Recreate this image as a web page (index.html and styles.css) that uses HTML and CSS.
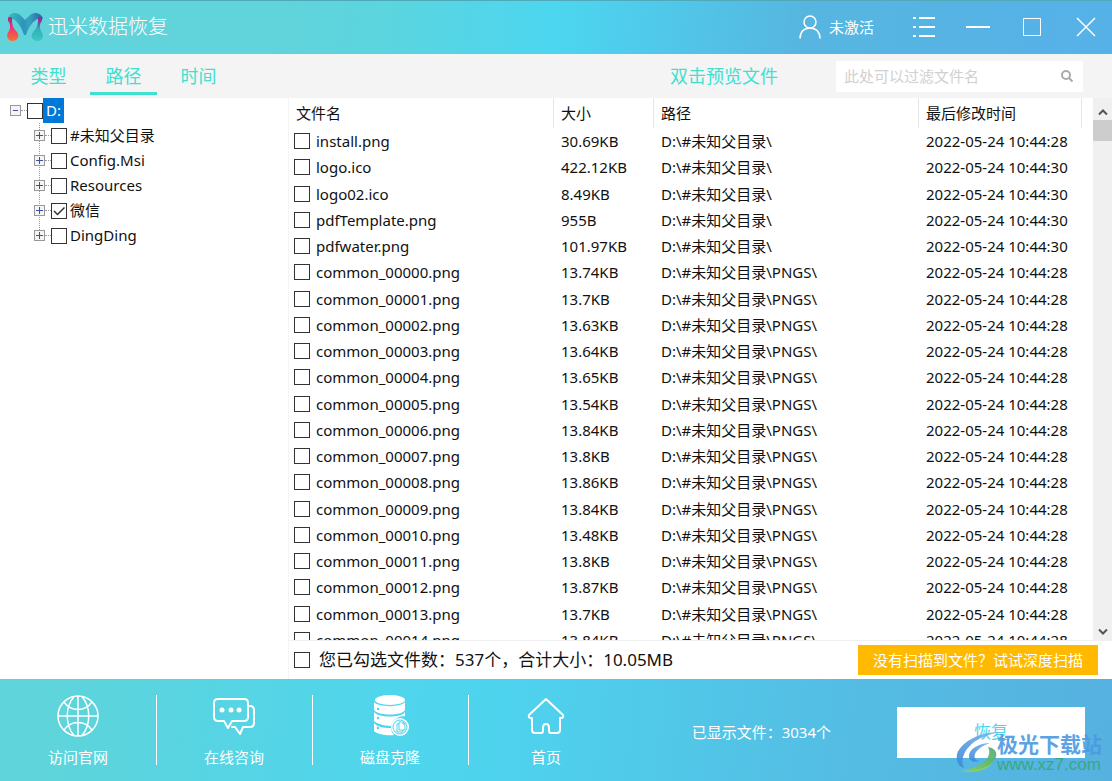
FILE: index.html
```html
<!DOCTYPE html>
<html lang="zh-CN">
<head>
<meta charset="utf-8">
<title>迅米数据恢复</title>
<link rel="stylesheet" href="styles.css">
</head>
<body>
<header class="titlebar">
  <svg class="logo" viewBox="0 0 36 30" aria-hidden="true">
    <defs>
      <linearGradient id="lg-arch" x1="0" y1="0" x2="1" y2="0"><stop offset="0" stop-color="#35c0c4"/><stop offset=".45" stop-color="#2f93bb"/><stop offset=".6" stop-color="#34a5bd"/><stop offset="1" stop-color="#2d5ea8"/></linearGradient>
      <linearGradient id="lg-left" x1="0" y1="0" x2="0" y2="1"><stop offset="0" stop-color="#a5267f"/><stop offset=".4" stop-color="#ee2f80"/><stop offset="1" stop-color="#f8722c"/></linearGradient>
      <linearGradient id="lg-right" x1="0" y1="0" x2="0" y2="1"><stop offset="0" stop-color="#a02587"/><stop offset=".25" stop-color="#7a4a9a"/><stop offset=".5" stop-color="#2fb0bc"/><stop offset="1" stop-color="#3cc8c0"/></linearGradient>
    </defs>
    <path fill="url(#lg-arch)" d="M1 7C1 1 9 -1 13 3L18 8L23 3C27 -1 35 1 36 7L32 6C26 9 22 14 19 23H17C14 14 10 8 4 6Z"/>
    <path fill="url(#lg-left)" d="M1 6C3 4 6 5 5 8C5 13 6 16 9 19C14 24 10 29 6 29C1 29 -2 24 2 19C4 15 3 11 1 9Z"/>
    <path fill="url(#lg-right)" d="M35 6C33 4 30 5 31 8C31 13 30 16 27 19C22 24 26 29 30 29C35 29 38 24 34 19C32 15 33 11 35 9Z"/>
  </svg>
  <h1 class="app-name">迅米数据恢复</h1>
  <button class="account" type="button">
    <svg class="icon-user" viewBox="0 0 22 24" aria-hidden="true"><circle cx="11" cy="7" r="6"/><path d="M1 23.500C1 17 5 13 11 13S21 17 21 23.500"/></svg>
    <span>未激活</span>
  </button>
  <div class="window-buttons">
    <button type="button" aria-label="菜单"><svg viewBox="0 0 24 24"><path stroke-width="2" d="M1 3H4M7 3H23M1 12H4M7 12H23M1 21H4M7 21H23"/></svg></button>
    <button type="button" aria-label="最小化"><svg viewBox="0 0 24 24"><path stroke-width="2" d="M0 12H24"/></svg></button>
    <button type="button" aria-label="最大化"><svg viewBox="0 0 24 24"><path stroke-width="1" d="M3.500 3.500H20.500V20.500H3.500Z"/></svg></button>
    <button type="button" aria-label="关闭"><svg viewBox="0 0 24 24"><path stroke-width="1.500" d="M3 3L21 21M21 3L3 21"/></svg></button>
  </div>
</header>

<div class="toolbar">
  <nav class="tabs">
    <button class="tab" type="button">类型</button>
    <button class="tab tab-active" type="button">路径</button>
    <button class="tab" type="button">时间</button>
  </nav>
  <span class="hint">双击预览文件</span>
  <div class="search">
    <input class="search-input" type="text" placeholder="此处可以过滤文件名" aria-label="过滤文件名">
    <button class="search-button" type="button" aria-label="搜索"><svg viewBox="0 0 14 14"><circle cx="6" cy="6" r="4"/><path d="M9 9L12.500 12.500"/></svg></button>
  </div>
</div>

<main class="main">
  <aside class="tree">
    <div class="node">
      <button class="expander" type="button" aria-label="折叠"></button><i class="dots"></i>
      <label class="node-label"><input class="check" type="checkbox"><span class="node-text node-selected">D:</span></label>
    </div>
    <div class="children">
      <div class="node"><button class="expander expander-plus" type="button" aria-label="展开"></button><i class="dots"></i><label class="node-label"><input class="check" type="checkbox"><span class="node-text">#未知父目录</span></label></div>
      <div class="node"><button class="expander expander-plus" type="button" aria-label="展开"></button><i class="dots"></i><label class="node-label"><input class="check" type="checkbox"><span class="node-text">Config.Msi</span></label></div>
      <div class="node"><button class="expander expander-plus" type="button" aria-label="展开"></button><i class="dots"></i><label class="node-label"><input class="check" type="checkbox"><span class="node-text">Resources</span></label></div>
      <div class="node"><button class="expander expander-plus" type="button" aria-label="展开"></button><i class="dots"></i><label class="node-label"><input class="check" type="checkbox" checked><span class="node-text">微信</span></label></div>
      <div class="node"><button class="expander expander-plus" type="button" aria-label="展开"></button><i class="dots"></i><label class="node-label"><input class="check" type="checkbox"><span class="node-text">DingDing</span></label></div>
    </div>
  </aside>

  <section class="content">
    <div class="list">
      <div class="list-view">
        <table class="files">
          <colgroup><col><col class="col-size"><col><col class="col-date"></colgroup>
          <thead><tr><th>文件名</th><th>大小</th><th>路径</th><th>最后修改时间</th></tr></thead>
          <tbody>
            <tr><td><label class="file"><input class="check" type="checkbox">install.png</label></td><td>30.69KB</td><td>D:\#未知父目录\</td><td>2022-05-24 10:44:28</td></tr>
            <tr><td><label class="file"><input class="check" type="checkbox">logo.ico</label></td><td>422.12KB</td><td>D:\#未知父目录\</td><td>2022-05-24 10:44:30</td></tr>
            <tr><td><label class="file"><input class="check" type="checkbox">logo02.ico</label></td><td>8.49KB</td><td>D:\#未知父目录\</td><td>2022-05-24 10:44:30</td></tr>
            <tr><td><label class="file"><input class="check" type="checkbox">pdfTemplate.png</label></td><td>955B</td><td>D:\#未知父目录\</td><td>2022-05-24 10:44:30</td></tr>
            <tr><td><label class="file"><input class="check" type="checkbox">pdfwater.png</label></td><td>101.97KB</td><td>D:\#未知父目录\</td><td>2022-05-24 10:44:30</td></tr>
            <tr><td><label class="file"><input class="check" type="checkbox">common_00000.png</label></td><td>13.74KB</td><td>D:\#未知父目录\PNGS\</td><td>2022-05-24 10:44:28</td></tr>
            <tr><td><label class="file"><input class="check" type="checkbox">common_00001.png</label></td><td>13.7KB</td><td>D:\#未知父目录\PNGS\</td><td>2022-05-24 10:44:28</td></tr>
            <tr><td><label class="file"><input class="check" type="checkbox">common_00002.png</label></td><td>13.63KB</td><td>D:\#未知父目录\PNGS\</td><td>2022-05-24 10:44:28</td></tr>
            <tr><td><label class="file"><input class="check" type="checkbox">common_00003.png</label></td><td>13.64KB</td><td>D:\#未知父目录\PNGS\</td><td>2022-05-24 10:44:28</td></tr>
            <tr><td><label class="file"><input class="check" type="checkbox">common_00004.png</label></td><td>13.65KB</td><td>D:\#未知父目录\PNGS\</td><td>2022-05-24 10:44:28</td></tr>
            <tr><td><label class="file"><input class="check" type="checkbox">common_00005.png</label></td><td>13.54KB</td><td>D:\#未知父目录\PNGS\</td><td>2022-05-24 10:44:28</td></tr>
            <tr><td><label class="file"><input class="check" type="checkbox">common_00006.png</label></td><td>13.84KB</td><td>D:\#未知父目录\PNGS\</td><td>2022-05-24 10:44:28</td></tr>
            <tr><td><label class="file"><input class="check" type="checkbox">common_00007.png</label></td><td>13.8KB</td><td>D:\#未知父目录\PNGS\</td><td>2022-05-24 10:44:28</td></tr>
            <tr><td><label class="file"><input class="check" type="checkbox">common_00008.png</label></td><td>13.86KB</td><td>D:\#未知父目录\PNGS\</td><td>2022-05-24 10:44:28</td></tr>
            <tr><td><label class="file"><input class="check" type="checkbox">common_00009.png</label></td><td>13.84KB</td><td>D:\#未知父目录\PNGS\</td><td>2022-05-24 10:44:28</td></tr>
            <tr><td><label class="file"><input class="check" type="checkbox">common_00010.png</label></td><td>13.48KB</td><td>D:\#未知父目录\PNGS\</td><td>2022-05-24 10:44:28</td></tr>
            <tr><td><label class="file"><input class="check" type="checkbox">common_00011.png</label></td><td>13.8KB</td><td>D:\#未知父目录\PNGS\</td><td>2022-05-24 10:44:28</td></tr>
            <tr><td><label class="file"><input class="check" type="checkbox">common_00012.png</label></td><td>13.87KB</td><td>D:\#未知父目录\PNGS\</td><td>2022-05-24 10:44:28</td></tr>
            <tr><td><label class="file"><input class="check" type="checkbox">common_00013.png</label></td><td>13.7KB</td><td>D:\#未知父目录\PNGS\</td><td>2022-05-24 10:44:28</td></tr>
            <tr><td><label class="file"><input class="check" type="checkbox">common_00014.png</label></td><td>13.84KB</td><td>D:\#未知父目录\PNGS\</td><td>2022-05-24 10:44:28</td></tr>
          </tbody>
        </table>
      </div>
      <div class="scrollbar">
        <button type="button" aria-label="向上滚动"><svg viewBox="0 0 10 8"><path d="M1 6.500L5 2.500L9 6.500"/></svg></button>
        <div class="thumb"></div>
        <button class="scroll-down" type="button" aria-label="向下滚动"><svg viewBox="0 0 10 8"><path d="M1 1.500L5 5.500L9 1.500"/></svg></button>
      </div>
    </div>
    <div class="summary">
      <label class="summary-label"><input class="check" type="checkbox">您已勾选文件数：537个，合计大小：10.05MB</label>
      <button class="deep-scan" type="button">没有扫描到文件？试试深度扫描</button>
    </div>
  </section>
</main>

<footer class="footer">
  <nav class="actions">
    <a class="action" href="#site">
      <svg viewBox="0 0 42 42"><g fill="none" stroke="#fff" stroke-width="1.500"><circle cx="21" cy="21" r="20"/><path d="M21 1V41M1 21H41M7 7C14 17 28 17 35 7M7 35C14 25 28 25 35 35M17 1.500C8 12 8 30 17 40.500M25 1.500C34 12 34 30 25 40.500"/></g></svg>
      <span>访问官网</span>
    </a>
    <a class="action" href="#chat">
      <svg viewBox="0 0 42 42"><g fill="none" stroke="#fff" stroke-width="2" stroke-linejoin="round" stroke-linecap="round"><path d="M5 4H31Q35 4 35 8V22Q35 26 31 26H19L15 33L11 26H5Q1 26 1 22V8Q1 4 5 4ZM37 11Q41 11 41 15V28Q41 32 37 32H30L27 39L22 32H19"/></g><g fill="#fff"><circle cx="9" cy="15" r="2.500"/><circle cx="18" cy="15" r="2.500"/><circle cx="26" cy="15" r="2.500"/></g></svg>
      <span>在线咨询</span>
    </a>
    <a class="action" href="#clone">
      <svg viewBox="0 0 42 42"><g fill="#fff"><ellipse cx="21" cy="5" rx="15" ry="5"/><path d="M5 7C9 12.500 33 12.500 36 7V15C33 21 9 21 5 15ZM5 17C9 23 33 23 36 17V21C30 21 24 24 22 31C14 31 7 28 5 26ZM5 28C8 32 14 33 22 33Q22 37 25 40C17 41 8 39 5 36Z"/><circle cx="31" cy="32" r="9"/></g><g fill="none" stroke="#4fd3eb"><circle cx="31" cy="32" r="7"/><path d="M30 27H34L36 29V35H30ZM34 27V29H36M30 29H28V37H34V35"/></g><g fill="#4fd3eb"><circle cx="9" cy="14" r="1.200"/><circle cx="9" cy="23" r="1.200"/><circle cx="9" cy="33" r="1.200"/></g></svg>
      <span>磁盘克隆</span>
    </a>
    <a class="action" href="#home">
      <svg viewBox="0 0 42 42"><path fill="none" stroke="#fff" stroke-width="2" stroke-linejoin="round" d="M21 4L38 20Q39 23 36 23H35V35Q35 38 32 38H26Q24 38 24 36V33Q24 29 21 29T18 33V36Q18 38 16 38H10Q7 38 7 35V23H6Q3 23 4 20Z"/></svg>
      <span>首页</span>
    </a>
  </nav>
  <span class="shown">已显示文件：3034个</span>
  <button class="recover" type="button">恢复</button>
  <div class="watermark">
    <svg class="watermark-mark" viewBox="0 0 44 42" aria-hidden="true">
      <defs><linearGradient id="wm-blue" x1="0" y1="1" x2="1" y2="0"><stop offset="0" stop-color="#3d86d8"/><stop offset="1" stop-color="#7cb8ec"/></linearGradient><linearGradient id="wm-green" x1="0" y1="1" x2="1" y2="0"><stop offset="0" stop-color="#93d44a"/><stop offset="1" stop-color="#45a878"/></linearGradient></defs>
      <path fill="url(#wm-blue)" d="M44 0C24 0 6 9 1 22C0 29 2 34 8 36C4 28 8 18 18 10C25 5 35 2 44 0Z"/>
      <path fill="url(#wm-blue)" d="M34 11C23 11 13 17 13 24C13 29 18 31 24 29C19 28 17 25 20 20C23 16 28 13 34 11Z"/>
      <path fill="url(#wm-green)" d="M32 15C44 17 42 28 33 33C23 39 12 39 3 38C14 38 25 34 30 28C34 23 34 19 32 15Z"/>
      <path fill="#93d44a" d="M3 39C16 42 30 39 37 31C31 35 20 40 3 39Z"/>
    </svg>
    <div class="watermark-text"><span class="watermark-name">极光下载站</span><span class="watermark-url">www.xz7.com</span></div>
  </div>
</footer>
</body>
</html>
```

FILE: styles.css
```css
* { box-sizing: border-box; }

body {
  display: flex;
  flex-direction: column;
  height: 100vh;
  margin: 0;
  overflow: hidden;
  background: #fff;
  color: #111;
  font: 15px/24px "Noto Sans", "Noto Sans CJK SC", sans-serif;
}

button {
  padding: 0;
  border: 0;
  background: none;
  color: inherit;
  font: inherit;
}

.titlebar {
  display: flex;
  flex: none;
  align-items: center;
  height: 54px;
  padding: 0 14px 2px 7px;
  border-top: 1px solid #4fa9b8;
  background: linear-gradient(97deg, #61d3da 25%, #5bd5df 35%, #4cd6f0 50%, #56b6e0 72%, #56b1e8);
  color: #fff;
}

.logo { width: 36px; height: 30px; }

.app-name {
  flex: 1;
  margin: 0 0 0 5px;
  font-size: 20px;
  font-weight: 300;
}

.account {
  display: flex;
  align-items: center;
  gap: 8px;
  margin-right: 38px;
}

.icon-user {
  width: 22px;
  height: 24px;
  fill: none;
  stroke: #fff;
  stroke-width: 1.500;
}

.window-buttons { display: flex; gap: 30px; }
.window-buttons button { width: 24px; height: 24px; }
.window-buttons svg { display: block; fill: none; stroke: #fff; }

.toolbar {
  display: flex;
  flex: none;
  align-items: center;
  height: 44px;
  padding-right: 29px;
  background: #f4f4f4;
  color: #40e0d0;
  font-size: 18px;
}

.tabs { display: flex; flex: 1; align-self: stretch; gap: 8px; padding-left: 15px; }

.tab {
  width: 67px;
  margin-bottom: 3px;
  padding-top: 6px;
  border-bottom: 3px solid transparent;
}

.tab-active { border-color: #40e0d0; }

.hint { margin-right: 58px; }

.search {
  display: flex;
  align-items: center;
  width: 247px;
  height: 31px;
  padding: 0 9px 0 8px;
  background: #fff;
}

.search-input {
  flex: 1;
  min-width: 0;
  padding: 0;
  border: 0;
  outline: 0;
  font: inherit;
  font-size: 15px;
}

.search-input::placeholder { color: #d0d0d0; }
.search-button { width: 14px; height: 14px; }
.search-button svg { display: block; fill: none; stroke: #aaa; stroke-width: 2; }

.main { display: flex; flex: 1; min-height: 0; }

.tree {
  flex: none;
  width: 289px;
  padding-left: 10px;
  border-right: 1px solid #f4f4f4;
}

.node { display: flex; align-items: center; height: 25px; }
.node-label { display: flex; align-items: center; }
.node-text { padding: 0 3px; line-height: 25px; }
.node-selected { background: #0078d7; color: #fff; }

.children {
  padding-left: 24px;
  background: repeating-linear-gradient(#999 0 1px, #fff 1px 2px) 29px 0 / 1px 113px no-repeat;
}

.expander {
  width: 11px;
  height: 11px;
  border: 1px solid #999;
  background: linear-gradient(#3c50a0, #3c50a0) center / 5px 1px no-repeat, #f4f4f4;
}

.expander-plus {
  background:
    linear-gradient(#3c50a0, #3c50a0) center / 7px 1px no-repeat,
    linear-gradient(#3c50a0, #3c50a0) center / 1px 7px no-repeat,
    #f4f4f4;
}

.dots { width: 6px; border-top: 1px dotted #999; }

.check {
  flex: none;
  width: 16px;
  height: 16px;
  margin: 0;
  border: 1px solid #333;
  background: #fff;
  appearance: none;
}

.check:checked {
  background: url("data:image/svg+xml,%3Csvg xmlns='http://www.w3.org/2000/svg' viewBox='0 0 14 14'%3E%3Cpath d='M2 7L5.500 10.500L12.500 3.500' fill='none' stroke='%23333' stroke-width='1.500'/%3E%3C/svg%3E");
}

.content { display: flex; flex: 1; flex-direction: column; min-width: 0; }
.list { display: flex; flex: 1; min-height: 0; }
.list-view { flex: 1; min-width: 0; padding-right: 11px; overflow: hidden; }

.files {
  width: 100%;
  height: 555px;
  border-spacing: 0;
  table-layout: fixed;
}

.col-size { width: 100px; }
.col-date { width: 163px; }

.files th {
  height: 30px;
  padding: 0 7px;
  border-right: 1px solid #e5e5e5;
  font-weight: 400;
  text-align: left;
}

.files td { padding: 0 7px; white-space: nowrap; }
.files td:first-child { padding-left: 5px; }
.file { display: flex; align-items: center; gap: 6px; }

.scrollbar {
  display: flex;
  flex: none;
  flex-direction: column;
  width: 19px;
  background: #f0f0f0;
}

.scrollbar button { height: 22px; }
.scrollbar svg { width: 10px; height: 8px; fill: none; stroke: #555; stroke-width: 2; }
.thumb { height: 21px; background: #cdcdcd; }
.scrollbar .scroll-down { margin-top: auto; }

.summary {
  display: flex;
  flex: none;
  align-items: center;
  justify-content: space-between;
  height: 39px;
  padding: 0 14px 0 5px;
  border-top: 1px solid #f0f0f0;
}

.summary-label { display: flex; align-items: center; gap: 9px; font-size: 17px; }

.deep-scan {
  width: 240px;
  height: 30px;
  background: #ffb900;
  color: #fff;
}

.footer {
  position: relative;
  display: flex;
  flex: none;
  align-items: center;
  height: 102px;
  padding: 4px 27px 0 0;
  background: linear-gradient(97deg, #5fd4da 4%, #4fd5ec 35%, #4ed3ee 45%, #54bde3 75%, #56b1e0);
  color: #fff;
}

.actions { display: flex; flex: 1; }

.action {
  display: flex;
  flex-direction: column;
  align-items: center;
  justify-content: space-between;
  width: 156px;
  height: 74px;
  color: #fff;
  text-decoration: none;
}

.action + .action {
  background: linear-gradient(#fff, #fff) 0 0 / 1px 70px no-repeat;
}

.action svg { width: 42px; height: 42px; }
.shown { margin-right: 66px; }

.recover {
  width: 188px;
  height: 51px;
  background: #fff;
  color: #4fd3eb;
  font-size: 17px;
}

.watermark {
  position: absolute;
  right: 10px;
  bottom: 7px;
  display: flex;
  align-items: center;
  opacity: .9;
}

.watermark-mark { width: 44px; height: 42px; margin-right: -3px; }
.watermark-text { display: flex; flex-direction: column; }
.watermark-name { color: #4c9ae0; font-size: 21px; font-weight: 700; line-height: 24px; }
.watermark-url { color: #35a878; font: 17px/18px "Liberation Sans", sans-serif; }
```
